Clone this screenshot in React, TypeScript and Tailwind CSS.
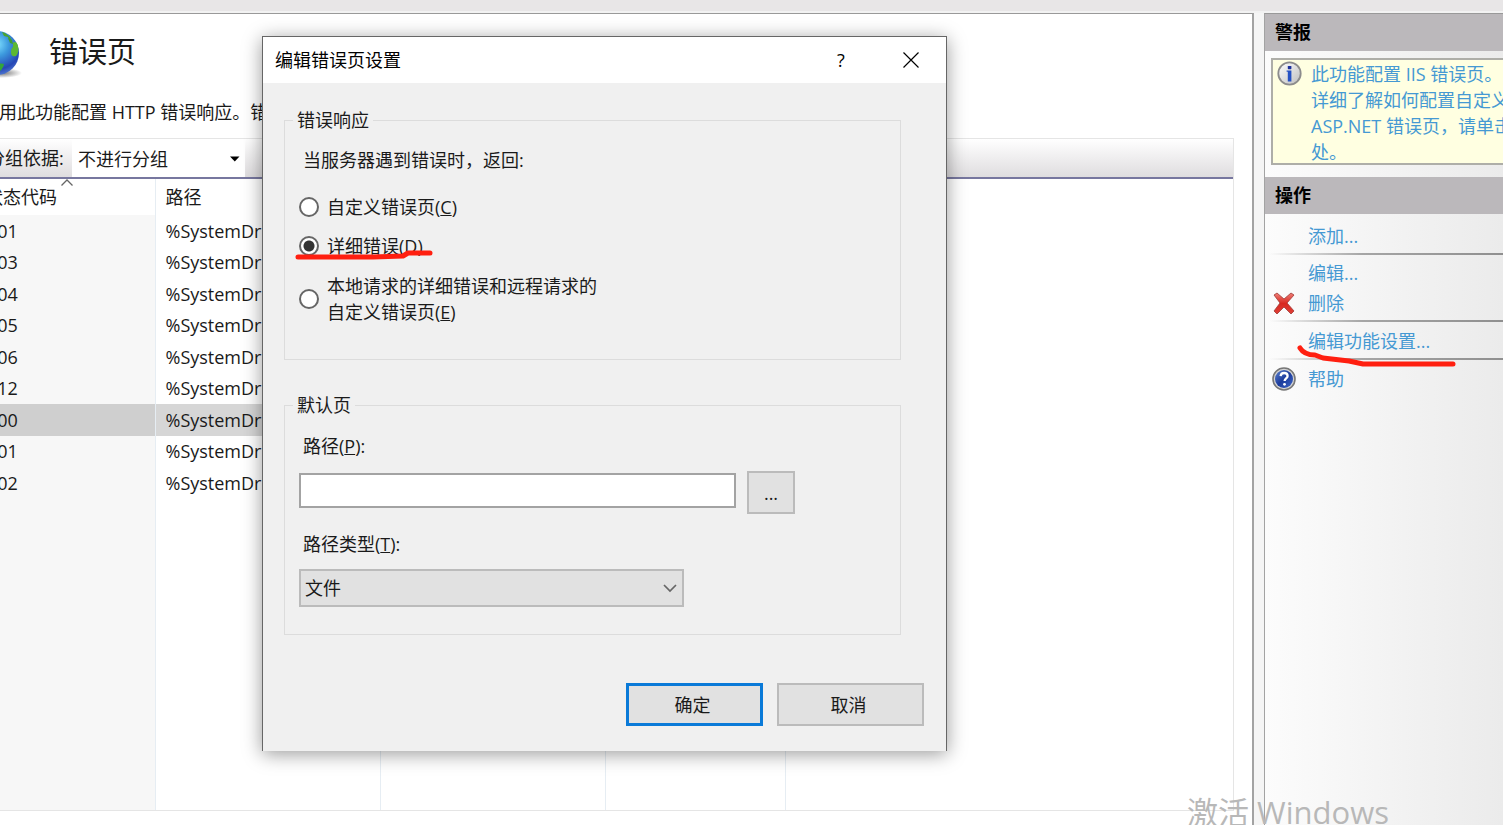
import React, { useState } from 'react';

interface ErrorPage {
  code: string;
  path: string;
}

const errorPages: ErrorPage[] = [
  { code: '401', path: '%SystemDr' },
  { code: '403', path: '%SystemDr' },
  { code: '404', path: '%SystemDr' },
  { code: '405', path: '%SystemDr' },
  { code: '406', path: '%SystemDr' },
  { code: '412', path: '%SystemDr' },
  { code: '500', path: '%SystemDr' },
  { code: '501', path: '%SystemDr' },
  { code: '502', path: '%SystemDr' },
];

const GlobeIcon = () => (
  <svg width="48" height="50" viewBox="0 0 48 50" className="shrink-0" aria-hidden="true">
    <defs>
      <radialGradient id="ocean" cx="0.5" cy="0.3" r="0.75">
        <stop offset="0" stopColor="#7fe0ff" />
        <stop offset="0.35" stopColor="#3d9ade" />
        <stop offset="0.75" stopColor="#2647b5" />
        <stop offset="1" stopColor="#5a86d8" />
      </radialGradient>
      <radialGradient id="globeShadow">
        <stop offset="0" stopColor="#777" />
        <stop offset="1" stopColor="#777" stopOpacity="0" />
      </radialGradient>
    </defs>
    <ellipse cx="27" cy="44" rx="20" ry="5" fill="url(#globeShadow)" />
    <circle cx="22" cy="24" r="22" fill="url(#ocean)" />
    <path d="M27 3l3 1 5 4 2 4-3-1-1-3-4-1z" fill="#4aa52e" />
    <path d="M38 14c2-2 4-1 5 3 1 4 0 8-2 10-3 1-5 0-5-4 0-3 1-4 2-5z" fill="#5cb832" />
    <path d="M33 9l4 2 1 4-3-1z" fill="#3f9b34" />
    <path d="M19 37c4-3 8-3 10-2-1 5-4 8-8 9l-5-1z" fill="#34a63a" />
  </svg>
);

const InfoIcon = () => (
  <svg width="25" height="25" viewBox="0 0 25 25" className="shrink-0" aria-hidden="true">
    <defs>
      <linearGradient id="info" x1="0" y1="0" x2="1" y2="1">
        <stop offset="0" stopColor="#fff" />
        <stop offset="1" stopColor="#bdbdbd" />
      </linearGradient>
    </defs>
    <circle cx="12.5" cy="12.5" r="11.2" fill="url(#info)" stroke="#8c8c8c" strokeWidth="1.8" />
    <rect x="10.8" y="5" width="3.6" height="3.2" rx="0.6" fill="#1a2f9c" />
    <path d="M9.6 9.4h4.8v11h-3.6v-9.6h-1.2z" fill="#2451c4" />
  </svg>
);

const DeleteIcon = () => (
  <svg width="24" height="24" viewBox="0 0 24 24" aria-hidden="true">
    <defs>
      <linearGradient id="cross" x1="0" y1="0" x2="0" y2="1">
        <stop offset="0" stopColor="#f08078" />
        <stop offset="0.5" stopColor="#d8281f" />
        <stop offset="1" stopColor="#e04038" />
      </linearGradient>
    </defs>
    <path
      d="M2 4l3-2 7 6 7-6 3 2-7 8 7 8-3 3-7-7-7 7-3-3 6-8z"
      fill="url(#cross)"
      stroke="#a03a36"
      strokeWidth="0.8"
      strokeLinejoin="round"
    />
  </svg>
);

const HelpIcon = () => (
  <svg width="24" height="24" viewBox="0 0 24 24" aria-hidden="true">
    <defs>
      <linearGradient id="help" x1="0" y1="0" x2="1" y2="1">
        <stop offset="0" stopColor="#5d83cf" />
        <stop offset="0.5" stopColor="#1c3c9c" />
        <stop offset="1" stopColor="#4068c8" />
      </linearGradient>
    </defs>
    <circle cx="12" cy="12" r="11" fill="#d5d5d5" stroke="#777" strokeWidth="1.6" />
    <circle cx="12" cy="12" r="9" fill="url(#help)" />
    <path
      d="M8.6 9.2c.2-2.2 1.6-3.2 3.5-3.2s3.5 1.1 3.5 2.9c0 2.4-3 2.5-3 5"
      fill="none"
      stroke="#fff"
      strokeWidth="2.3"
    />
    <circle cx="12.5" cy="17.3" r="1.4" fill="#fff" />
  </svg>
);

const PaneHeader = ({ title }: { title: string }) => (
  <h2 className="h-[37px] bg-[#bbb8bb] pl-[10px] leading-[37px] font-bold text-black">{title}</h2>
);

const Separator = () => <div className="ml-1 h-[2px] bg-linear-to-r from-transparent via-[#a5a5a5] via-40% to-[#8f8f8f]" />;

interface ActionProps {
  label: string;
  icon?: React.ReactNode;
}

const ActionLink: React.FC<ActionProps> = ({ label, icon }) => (
  <a href="#" className="flex h-[30px] items-center pl-[7px] text-[#4599d3]">
    <span className="w-9 shrink-0">{icon}</span>
    {label}
  </a>
);

const ActionsPane = () => (
  <aside className="w-[239px] shrink-0 overflow-hidden border-t border-l border-t-[#999] border-l-[#a3a3a3] bg-linear-to-r from-[#fcfcfc] to-[#ebebeb]">
    <PaneHeader title="警报" />
    <div className="mt-[7px] -mr-8 ml-[6px] flex h-[107px] border-2 border-[#aeaea8] bg-[#ffffe1] pt-px pl-1">
      <InfoIcon />
      <p className="ml-[9px] leading-[26px] whitespace-nowrap text-[#4599d3]">
        此功能配置 IIS 错误页。
        <br />
        详细了解如何配置自定义
        <br />
        ASP.NET 错误页，请单击
        <br />
        处。
      </p>
    </div>
    <div className="mt-3">
      <PaneHeader title="操作" />
    </div>
    <nav className="pt-[7px]">
      <ActionLink label="添加..." />
      <div className="py-[2px]"><Separator /></div>
      <div className="pt-[1px]">
        <ActionLink label="编辑..." />
        <ActionLink label="删除" icon={<DeleteIcon />} />
      </div>
      <div className="pt-[2px] pb-1"><Separator /></div>
      <div className="relative">
        <ActionLink label="编辑功能设置..." />
        <svg width="162" height="26" viewBox="0 0 162 26" className="absolute top-[16px] left-[30px] z-10" aria-hidden="true">
          <path
            d="M5 6C8 11 12 13 20 13L28 16L54 19L68 22L158 22"
            fill="none"
            stroke="#ff1f10"
            strokeWidth="5"
            strokeLinecap="round"
            strokeLinejoin="round"
          />
        </svg>
      </div>
      <div className="pt-[2px] pb-1"><Separator /></div>
      <ActionLink label="帮助" icon={<HelpIcon />} />
    </nav>
  </aside>
);

const ErrorPagesPanel = () => (
  <main className="min-w-0 flex-1 overflow-hidden border-t border-r-2 border-t-[#999] border-r-[#a3a3a3] bg-white">
    {/* the list is scrolled a little to the right, so its left edge is cut off */}
    <div className="-ml-[25px] flex h-full flex-col pr-[18px] pb-[14px]">
      <div className="flex h-[76px] items-center">
        <div className="pt-1"><GlobeIcon /></div>
        <h1 className="ml-[26px] text-[29px]">错误页</h1>
      </div>
      <p className="h-[48px] pl-6 leading-[45px] whitespace-nowrap">用此功能配置 HTTP 错误响应。错</p>
      <div className="flex min-h-0 flex-1 flex-col border border-[#e5e5e5]">
        <div className="flex h-[40px] shrink-0 items-stretch border-b-2 border-[#77779f] bg-linear-to-b from-white to-[#dfdddf]">
          <label htmlFor="group" className="w-[96px] shrink-0 pl-[11px] leading-[38px] whitespace-nowrap">分组依据:</label>
          <div className="relative flex w-[173px]">
            <select id="group" className="w-full appearance-none bg-white pt-[2px] pl-[6px]">
              <option>不进行分组</option>
            </select>
            <svg width="10" height="6" viewBox="0 0 10 6" className="pointer-events-none absolute top-[17px] right-[5px]" aria-hidden="true">
              <path d="M0 0.5h9.5L4.8 5.5z" fill="#000" />
            </svg>
          </div>
        </div>
        <table className="h-full w-full table-fixed border-collapse text-left">
          <colgroup>
            <col className="w-[179px]" />
            <col className="w-[225px]" />
            <col className="w-[225px]" />
            <col className="w-[180px]" />
            <col />
          </colgroup>
          <thead>
            <tr className="h-[36px]">
              <th className="relative border-r border-[#e6edf3] pl-[9px] font-normal">
                状态代码
                <svg width="12" height="7" viewBox="0 0 12 7" className="absolute top-0 right-[82px]" aria-hidden="true">
                  <path d="M0.5 6.5L6 1l5.5 5.5" fill="none" stroke="#666" strokeWidth="1.3" />
                </svg>
              </th>
              <th className="border-r border-[#e6edf3] pl-[10px] font-normal">路径</th>
              <th className="border-r border-[#e6edf3]" />
              <th className="border-r border-[#e6edf3]" />
              <th />
            </tr>
          </thead>
          <tbody>
            {errorPages.map((page) => {
              const selected = page.code === '500';
              const cell = selected ? 'bg-[#d6d6d6]' : '';
              return (
                <tr key={page.code} className="odd:h-[32px] even:h-[31px]">
                  <td className={`border-r border-[#e6edf3] pl-[11px] ${selected ? 'bg-[#cfcfcf]' : 'bg-[#f7f7f7]'}`}>{page.code}</td>
                  <td className={`border-r border-[#e6edf3] pl-[10px] ${cell}`}>{page.path}</td>
                  <td className={`border-r border-[#e6edf3] ${cell}`} />
                  <td className={`border-r border-[#e6edf3] ${cell}`} />
                  <td />
                </tr>
              );
            })}
            <tr>
              <td className="border-r border-[#e6edf3] bg-[#f7f7f7]" />
              <td className="border-r border-[#e6edf3]" />
              <td className="border-r border-[#e6edf3]" />
              <td className="border-r border-[#e6edf3]" />
              <td />
            </tr>
          </tbody>
        </table>
      </div>
    </div>
  </main>
);

interface ModeOptionProps {
  value: string;
  current: string;
  onSelect: (value: string) => void;
  className: string;
  children: React.ReactNode;
}

const ModeOption: React.FC<ModeOptionProps> = ({ value, current, onSelect, className, children }) => (
  <label className={`flex items-center gap-2 ${className}`}>
    <input
      type="radio"
      name="mode"
      checked={current === value}
      onChange={() => onSelect(value)}
      className="size-5 shrink-0 appearance-none rounded-full border-2 border-[#666] bg-white checked:bg-[radial-gradient(circle,#333_5px,#fff_6px)]"
    />
    <span>{children}</span>
  </label>
);

const EditDialog = () => {
  const [mode, setMode] = useState('detailed');
  const [path, setPath] = useState('');

  return (
    <div
      role="dialog"
      aria-labelledby="dialog-title"
      className="absolute top-[36px] left-[262px] w-[685px] border border-b-0 border-[#666] bg-[#f0f0f0] shadow-[0_3px_18px_rgba(0,0,0,0.4)]"
    >
      <div className="flex h-[46px] items-center bg-white">
        <h2 id="dialog-title" className="flex-1 pl-3 text-black">编辑错误页设置</h2>
        <button aria-label="帮助" className="flex h-full w-[70px] items-center justify-center text-black">?</button>
        <button aria-label="关闭" className="flex h-full w-[70px] items-center justify-center">
          <svg width="16" height="16" viewBox="0 0 16 16" aria-hidden="true">
            <path d="M0.5 0.5l15 15M15.5 0.5l-15 15" stroke="#000" strokeWidth="1.2" />
          </svg>
        </button>
      </div>

      <form className="pt-[25px] pr-[22px] pb-[25px] pl-[21px] leading-[26px]" onSubmit={(e) => e.preventDefault()}>
        <fieldset className="mr-[23px] h-[252px] border border-[#dcdcdc] px-[14px]">
          <legend className="-ml-[6px] px-1 leading-[24px]">错误响应</legend>
          <p className="mt-[15px] pl-1">当服务器遇到错误时，返回:</p>
          <ModeOption value="custom" current={mode} onSelect={setMode} className="mt-[21px]">
            自定义错误页(<u>C</u>)
          </ModeOption>
          <div className="relative">
            <ModeOption value="detailed" current={mode} onSelect={setMode} className="mt-[13px]">
              详细错误(<u>D</u>)
            </ModeOption>
            <svg width="140" height="14" viewBox="0 0 140 14" className="absolute top-[14px] -left-1" aria-hidden="true">
              <path
                d="M3 10H78L108 9L113 6H135"
                fill="none"
                stroke="#ff1f10"
                strokeWidth="5"
                strokeLinecap="round"
                strokeLinejoin="round"
              />
            </svg>
          </div>
          <ModeOption value="remote" current={mode} onSelect={setMode} className="mt-[14px]">
            本地请求的详细错误和远程请求的
            <br />
            自定义错误页(<u>E</u>)
          </ModeOption>
        </fieldset>

        <fieldset className="mt-[33px] mr-[23px] h-[242px] border border-[#dcdcdc] px-[14px]">
          <legend className="-ml-[6px] px-1 leading-[24px]">默认页</legend>
          <label htmlFor="path" className="mt-4 block pl-1">路径(<u>P</u>):</label>
          <div className="mt-3 flex gap-[11px]">
            <input
              id="path"
              type="text"
              value={path}
              onChange={(e) => setPath(e.target.value)}
              className="mt-[2px] h-[35px] w-[437px] border-2 border-[#a3a3a3] bg-white px-1"
            />
            <button type="button" className="h-[43px] w-[48px] border-2 border-[#bbb] bg-[#e1e1e1]">...</button>
          </div>
          <label htmlFor="path-type" className="mt-[17px] block pl-1">路径类型(<u>T</u>):</label>
          <div className="relative mt-3 w-[385px]">
            <select id="path-type" className="h-[38px] w-full appearance-none border-2 border-[#bbb] bg-[#e1e1e1] pl-1">
              <option>文件</option>
            </select>
            <svg width="14" height="9" viewBox="0 0 14 9" className="pointer-events-none absolute top-[15px] right-[7px]" aria-hidden="true">
              <path d="M1 1l6 6 6-6" fill="none" stroke="#666" strokeWidth="1.7" />
            </svg>
          </div>
        </fieldset>

        <div className="mt-12 flex justify-end gap-[14px]">
          <button type="submit" className="h-[43px] w-[137px] border-3 border-[#0a7ad8] bg-[#e1e1e1] pr-1">确定</button>
          <button type="button" className="h-[43px] w-[147px] border-2 border-[#bbb] bg-[#e1e1e1] pr-1">取消</button>
        </div>
      </form>
    </div>
  );
};

const App = () => (
  <div className="relative flex h-screen flex-col overflow-hidden bg-[#f5f5f5] font-['Open_Sans','Noto_Sans_CJK_SC',sans-serif] text-[18px] text-[#1a1a1a]">
    <div className="h-[13px] shrink-0 border-b-2 border-[#f2f2f2] bg-[#e8e6e7]" />
    <div className="flex min-h-0 flex-1 gap-[10px]">
      <ErrorPagesPanel />
      <ActionsPane />
    </div>
    <EditDialog />
    <div className="pointer-events-none absolute right-[114px] -bottom-[7px] text-[31px] leading-[40px] text-[#b8b8b8]">
      激活 Windows
    </div>
  </div>
);

export default App;
